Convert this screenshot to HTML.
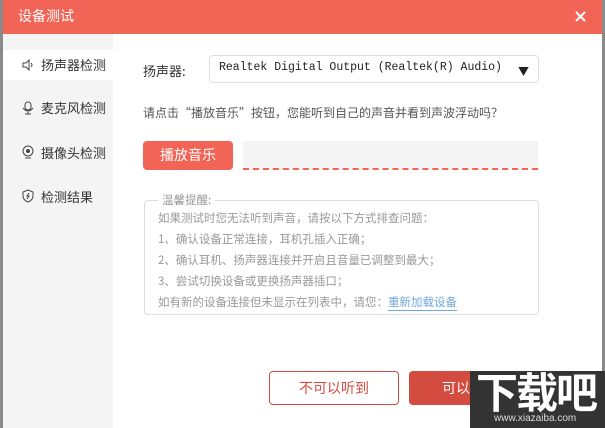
<!DOCTYPE html>
<html><head><meta charset="utf-8"><style>
*{margin:0;padding:0;box-sizing:border-box}
body{width:605px;height:428px;overflow:hidden;background:#fff;font-family:"Noto Sans CJK SC","Liberation Sans",sans-serif;position:relative}
.a{position:absolute}
.n{font-size:13px;color:#333;line-height:16px}
svg{position:absolute}
</style></head><body>
<div class="a" style="left:0;top:0;width:3px;height:428px;background:#8a8a8a"></div>
<div class="a" style="right:0;top:0;width:3px;height:428px;background:#8a8a8a"></div>
<div class="a" style="left:3px;top:0;width:599px;height:34px;background:#f26455"></div>
<div class="a" style="left:18px;top:6px;color:#fff;font-size:14px;line-height:20px">设备测试</div>
<svg style="left:575px;top:11px" width="11" height="11"><path d="M1 1L10 10M10 1L1 10" stroke="#fff" stroke-width="2"/></svg>
<div class="a" style="left:3px;top:34px;width:110px;height:394px;background:#f4f4f4"></div>
<div class="a" style="left:3px;top:50px;width:110px;height:30px;background:#fff"></div>
<svg style="left:22px;top:59px" width="12" height="12"><path d="M1 4h3l3-3v10l-3-3H1z" fill="none" stroke="#444"/><path d="M9 4q2 2 0 4" fill="none" stroke="#444"/></svg>
<div class="a n" style="left:41px;top:57px">扬声器检测</div>
<svg style="left:22px;top:101px" width="12" height="14"><rect x="3" y="1" width="6" height="8" rx="3" fill="none" stroke="#444"/><path d="M1 7q5 6 10 0M6 11v2M3 13h6" fill="none" stroke="#444"/></svg>
<div class="a n" style="left:41px;top:100px">麦克风检测</div>
<svg style="left:22px;top:145px" width="12" height="14"><circle cx="6" cy="6" r="5" fill="none" stroke="#444"/><circle cx="6" cy="6" r="2" fill="#444"/><path d="M3 13h6" stroke="#444"/></svg>
<div class="a n" style="left:41px;top:145px">摄像头检测</div>
<svg style="left:22px;top:189px" width="12" height="14"><path d="M6 1L11 3v4q0 4-5 6q-5-2-5-6V3z" fill="none" stroke="#444"/><path d="M7 4L5 7h2l-2 3" fill="none" stroke="#444"/></svg>
<div class="a n" style="left:41px;top:189px">检测结果</div>
<div class="a" style="left:143px;top:61px;font-size:13px;color:#333">扬声器:</div>
<div class="a" style="left:209px;top:55px;width:330px;height:28px;border:1px solid #ddd;border-radius:4px"></div>
<div class="a" style="left:219px;top:61px;font-family:'Liberation Mono',monospace;font-size:11.5px;color:#222">Realtek Digital Output (Realtek(R) Audio)</div>
<div class="a" style="left:518px;top:63px;font-size:11px;color:#222">▼</div>
<div class="a" style="left:143px;top:104px;font-size:12px;color:#555">请点击“播放音乐”按钮，您能听到自己的声音并看到声波浮动吗？</div>
<div class="a" style="left:143px;top:141px;width:90px;height:29px;background:#f26455;border-radius:4px;color:#fff;font-size:14px;text-align:center;line-height:29px">播放音乐</div>
<div class="a" style="left:243px;top:141px;width:295px;height:29px;background:#f4f4f4;border-bottom:2px dashed #f26455"></div>
<div class="a" style="left:144px;top:200px;width:395px;height:115px;border:1px solid #ddd;border-radius:4px"></div>
<div class="a" style="left:158px;top:192px;background:#fff;padding:0 4px;font-size:11.5px;color:#999">温馨提醒:</div>
<div class="a" style="left:158px;top:208px;font-size:11.5px;color:#999;line-height:21px">如果测试时您无法听到声音，请按以下方式排查问题：<br>1、确认设备正常连接，耳机孔插入正确；<br>2、确认耳机、扬声器连接并开启且音量已调整到最大；<br>3、尝试切换设备或更换扬声器插口；<br>如有新的设备连接但未显示在列表中，请您：<span style="color:#6fa8dc;border-bottom:1px solid #6fa8dc">重新加载设备</span></div>
<div class="a" style="left:269px;top:371px;width:130px;height:34px;border:1px solid #d44b3f;border-radius:4px;color:#d44b3f;font-size:14px;text-align:center;line-height:32px">不可以听到</div>
<div class="a" style="left:409px;top:371px;width:129px;height:34px;background:#d44b3f;border-radius:4px;color:#fff;font-size:14px;line-height:34px;padding-left:33px">可以听到</div>
<div class="a" style="left:470px;top:371px;width:135px;height:57px;background:#333"></div>
<div class="a" style="left:476px;top:366px;color:#fff;font-size:42px;font-weight:bold;line-height:50px;letter-spacing:-2px">下载吧</div>
<div class="a" style="left:494px;top:413px;color:#ddd;font-size:10px;font-family:'Liberation Sans',sans-serif">www.xiazaiba.com</div>
</body></html>
